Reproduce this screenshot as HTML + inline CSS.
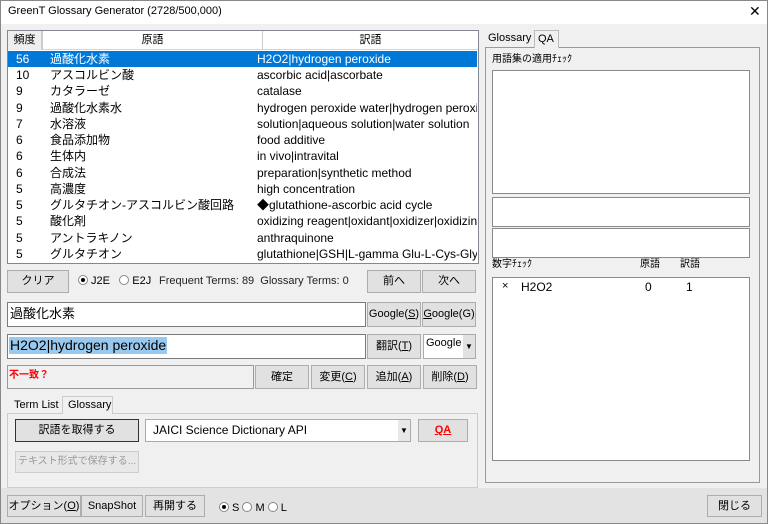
<!DOCTYPE html>
<html><head><meta charset="utf-8"><style>
*{box-sizing:border-box;margin:0;padding:0}
body{width:768px;height:524px;overflow:hidden;background:#f0f0f0;font-family:"Liberation Sans","Noto Sans CJK JP",sans-serif;font-size:12px;color:#000;position:relative}
.a{position:absolute;white-space:nowrap;line-height:1.2}
.btn{position:absolute;background:#e1e1e1;border:1px solid #adadad;display:flex;align-items:center;justify-content:center;font-size:11px;white-space:nowrap;line-height:1}
.box{position:absolute;background:#fff;border:1px solid #8a8a8a}
.row{position:absolute;left:8px;width:469px;height:16px;font-size:12px;line-height:16px}
.row span{position:absolute;top:0;height:16px;line-height:16px;white-space:nowrap;overflow:hidden}
.c1{left:8px}.c2{left:42px}.c3{left:249px;width:220px}
.rad{display:inline-block;width:10px;height:10px;border:1px solid #888;border-radius:50%;background:#fff;vertical-align:-1px;position:relative}
.rad.on::after{content:"";position:absolute;left:2px;top:2px;width:4px;height:4px;border-radius:50%;background:#000}
</style></head><body>
<div class="a" style="left:0;top:0;width:768px;height:24px;background:#fff"></div>
<div class="a" style="left:8px;top:5px;font-size:11px">GreenT Glossary Generator (2728/500,000)</div>
<div class="a" style="left:749px;top:3px;font-size:14px">✕</div>
<div class="a" style="left:0;top:488px;width:768px;height:36px;background:#e3e3e3"></div>
<div class="a" style="left:0;top:0;width:768px;height:524px;border:1px solid #888"></div>

<div class="box" style="left:7px;top:30px;width:472px;height:234px;border-color:#828790"></div>
<div class="a" style="left:8px;top:31px;width:470px;height:19px;background:#fff;border-bottom:1px solid #d5d5d5"></div>
<div class="a" style="left:8px;top:31px;width:35px;height:19px;background:#eee;border-right:2px solid #ccc;text-align:center;line-height:19px;font-size:11px">頻度</div>
<div class="a" style="left:43px;top:31px;width:220px;height:19px;border-right:1px solid #ccc;text-align:center;line-height:19px;font-size:11px">原語</div>
<div class="a" style="left:263px;top:31px;width:215px;height:19px;text-align:center;line-height:19px;font-size:11px">訳語</div>
<div class="row" style="top:51px;background:#0078d7;color:#fff"><span class="c1">56</span><span class="c2">過酸化水素</span><span class="c3">H2O2|hydrogen peroxide</span></div>
<div class="row" style="top:67px"><span class="c1">10</span><span class="c2">アスコルビン酸</span><span class="c3">ascorbic acid|ascorbate</span></div>
<div class="row" style="top:83px"><span class="c1">9</span><span class="c2">カタラーゼ</span><span class="c3">catalase</span></div>
<div class="row" style="top:100px"><span class="c1">9</span><span class="c2">過酸化水素水</span><span class="c3">hydrogen peroxide water|hydrogen peroxide</span></div>
<div class="row" style="top:116px"><span class="c1">7</span><span class="c2">水溶液</span><span class="c3">solution|aqueous solution|water solution</span></div>
<div class="row" style="top:132px"><span class="c1">6</span><span class="c2">食品添加物</span><span class="c3">food additive</span></div>
<div class="row" style="top:148px"><span class="c1">6</span><span class="c2">生体内</span><span class="c3">in vivo|intravital</span></div>
<div class="row" style="top:165px"><span class="c1">6</span><span class="c2">合成法</span><span class="c3">preparation|synthetic method</span></div>
<div class="row" style="top:181px"><span class="c1">5</span><span class="c2">高濃度</span><span class="c3">high concentration</span></div>
<div class="row" style="top:197px"><span class="c1">5</span><span class="c2">グルタチオン-アスコルビン酸回路</span><span class="c3">◆glutathione-ascorbic acid cycle</span></div>
<div class="row" style="top:213px"><span class="c1">5</span><span class="c2">酸化剤</span><span class="c3">oxidizing reagent|oxidant|oxidizer|oxidizing</span></div>
<div class="row" style="top:230px"><span class="c1">5</span><span class="c2">アントラキノン</span><span class="c3">anthraquinone</span></div>
<div class="row" style="top:246px"><span class="c1">5</span><span class="c2">グルタチオン</span><span class="c3">glutathione|GSH|L-gamma Glu-L-Cys-Gly-</span></div>

<div class="btn" style="left:7px;top:270px;width:62px;height:23px">クリア</div>
<div class="a" style="left:78px;top:275px;font-size:11px"><span class="rad on"></span> J2E &nbsp; <span class="rad"></span> E2J</div>
<div class="a" style="left:159px;top:275px;font-size:11px;color:#222">Frequent Terms: 89&nbsp; Glossary Terms: 0</div>
<div class="btn" style="left:367px;top:270px;width:54px;height:23px">前へ</div>
<div class="btn" style="left:422px;top:270px;width:54px;height:23px">次へ</div>

<div class="box" style="left:7px;top:302px;width:359px;height:25px;border-color:#7a7a7a"></div>
<div class="a" style="left:10px;top:306px;font-size:13px">過酸化水素</div>
<div class="btn" style="left:367px;top:302px;width:54px;height:25px">Google(<u>S</u>)</div>
<div class="btn" style="left:422px;top:302px;width:54px;height:25px"><u>G</u>oogle(G)</div>
<div class="box" style="left:7px;top:334px;width:359px;height:25px;border-color:#7a7a7a"></div>
<div class="a" style="left:9px;top:337px;font-size:14px;background:#99c9ef;padding:0 1px">H2O2|hydrogen peroxide</div>
<div class="btn" style="left:367px;top:334px;width:54px;height:25px">翻訳(<u>T</u>)</div>
<div class="box" style="left:423px;top:334px;width:53px;height:25px;border-color:#aaa"></div>
<div class="a" style="left:426px;top:337px;font-size:11px">Google</div>
<div class="a" style="left:463px;top:335px;width:12px;height:23px;background:#e1e1e1;font-size:8px;text-align:center;line-height:23px">▼</div>

<div class="a" style="left:7px;top:365px;width:247px;height:24px;border:1px solid #999;background:#f0f0f0"></div>
<div class="a" style="left:9px;top:370px;font-size:10px;color:#f00;font-weight:bold">不一致？</div>
<div class="btn" style="left:255px;top:365px;width:54px;height:24px">確定</div>
<div class="btn" style="left:311px;top:365px;width:54px;height:24px">変更(<u>C</u>)</div>
<div class="btn" style="left:367px;top:365px;width:54px;height:24px">追加(<u>A</u>)</div>
<div class="btn" style="left:423px;top:365px;width:54px;height:24px">削除(<u>D</u>)</div>

<div class="a" style="left:7px;top:413px;width:471px;height:75px;border:1px solid #ccc;background:#f0f0f0"></div>
<div class="a" style="left:10px;top:397px;font-size:11px;padding:2px 4px">Term List</div>
<div class="a" style="left:62px;top:396px;width:51px;height:18px;font-size:11px;padding:2px 5px;border:1px solid #ccc;border-bottom:none;background:#f0f0f0">Glossary</div>
<div class="btn" style="left:15px;top:419px;width:124px;height:23px;border:1px solid #333">訳語を取得する</div>
<div class="box" style="left:145px;top:419px;width:266px;height:23px;border-color:#aaa"></div>
<div class="a" style="left:153px;top:423px;font-size:12px">JAICI Science Dictionary API</div>
<div class="a" style="left:398px;top:420px;width:12px;height:21px;background:#e8e8e8;font-size:8px;text-align:center;line-height:21px">▼</div>
<div class="btn" style="left:418px;top:419px;width:50px;height:23px;color:#f00;font-weight:bold"><u>QA</u></div>
<div class="btn" style="left:15px;top:451px;width:124px;height:22px;color:#999;background:#e8e8e8;border-color:#ccc;font-size:10px">テキスト形式で保存する...</div>

<div class="a" style="left:485px;top:47px;width:275px;height:436px;border:1px solid #999;background:#f0f0f0"></div>
<div class="a" style="left:488px;top:32px;font-size:11px">Glossary</div>
<div class="a" style="left:534px;top:30px;width:25px;height:18px;border:1px solid #bbb;border-bottom:none;background:#f0f0f0;font-size:11px;padding:2px 3px">QA</div>
<div class="a" style="left:492px;top:54px;font-size:10px">用語集の適用ﾁｪｯｸ</div>
<div class="box" style="left:492px;top:70px;width:258px;height:124px"></div>
<div class="box" style="left:492px;top:197px;width:258px;height:30px"></div>
<div class="box" style="left:492px;top:228px;width:258px;height:30px"></div>
<div class="a" style="left:492px;top:259px;font-size:10px">数字ﾁｪｯｸ</div>
<div class="a" style="left:640px;top:259px;font-size:10px">原語</div>
<div class="a" style="left:680px;top:259px;font-size:10px">訳語</div>
<div class="box" style="left:492px;top:277px;width:258px;height:184px"></div>
<div class="a" style="left:502px;top:280px;font-size:11px">×</div>
<div class="a" style="left:521px;top:280px;font-size:12px">H2O2</div>
<div class="a" style="left:645px;top:280px;font-size:12px">0</div>
<div class="a" style="left:686px;top:280px;font-size:12px">1</div>

<div class="btn" style="left:7px;top:495px;width:74px;height:22px">オプション(<u>O</u>)</div>
<div class="btn" style="left:81px;top:495px;width:62px;height:22px">SnapShot</div>
<div class="btn" style="left:145px;top:495px;width:60px;height:22px">再開する</div>
<div class="a" style="left:219px;top:502px;font-size:11px"><span class="rad on"></span> S <span class="rad"></span> M <span class="rad"></span> L</div>
<div class="btn" style="left:707px;top:495px;width:55px;height:22px">閉じる</div>
</body></html>
